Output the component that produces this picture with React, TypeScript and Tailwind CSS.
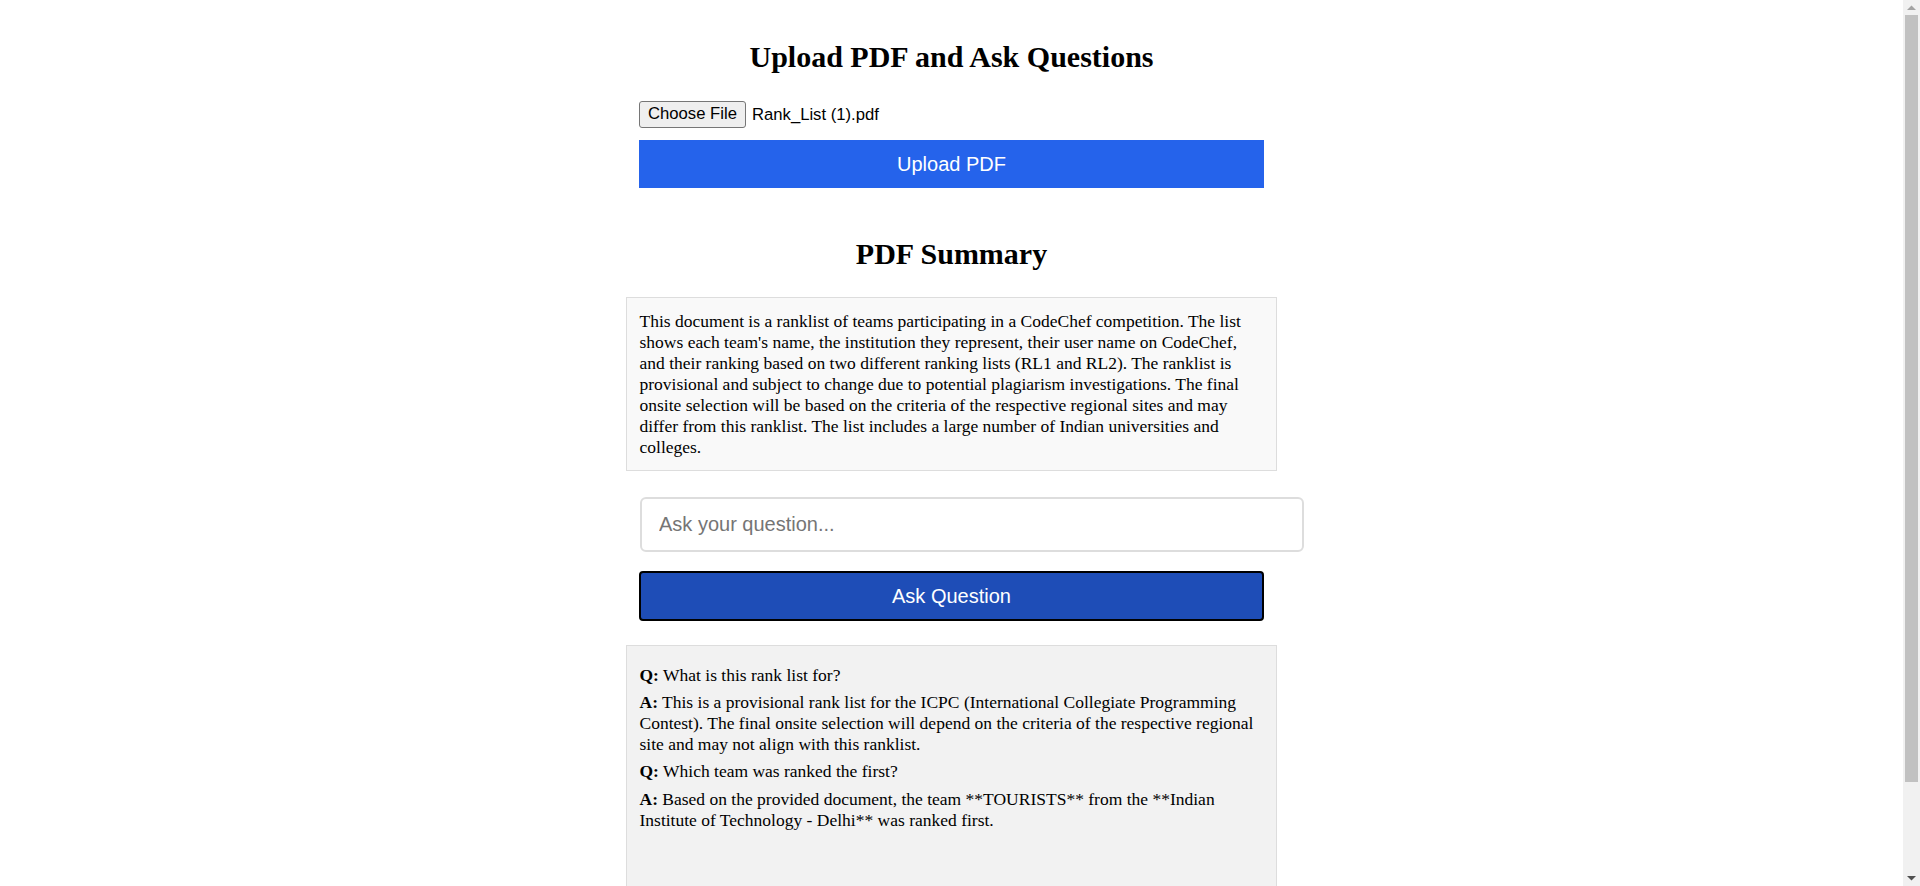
import React from 'react';

const qa = [
  {
    q: 'What is this rank list for?',
    a: 'This is a provisional rank list for the ICPC (International Collegiate Programming Contest). The final onsite selection will depend on the criteria of the respective regional site and may not align with this ranklist.',
  },
  {
    q: 'Which team was ranked the first?',
    a: 'Based on the provided document, the team **TOURISTS** from the **Indian Institute of Technology - Delhi** was ranked first.',
  },
];

function Scrollbar() {
  return (
    <div className="w-[17px] shrink-0 h-full bg-[#f1f1f1] flex flex-col items-center">
      <div className="h-[15px] flex items-center justify-center">
        <svg width="9" height="5" viewBox="0 0 9 5">
          <path d="M0 5 L4.5 0.5 L9 5 Z" fill="#a3a3a3" />
        </svg>
      </div>
      <div className="w-[13px] h-[767px] bg-[#c1c1c1]" />
      <div className="flex-1" />
      <div className="h-[15px] flex items-center justify-center">
        <svg width="9" height="5" viewBox="0 0 9 5">
          <path d="M0 0 L4.5 4.5 L9 0 Z" fill="#505050" />
        </svg>
      </div>
    </div>
  );
}

export default function App() {
  return (
    <div className="h-screen flex bg-white text-black font-['Liberation_Serif','Times_New_Roman',serif]">
      <div className="flex-1 overflow-hidden">
        <div className="flex flex-col items-center pt-[40px] pb-[42px]">
          <h1 className="text-[30px] font-bold leading-[34.5px]">Upload PDF and Ask Questions</h1>

          {/* Upload */}
          <div className="w-[625px] mt-[26.5px] font-['Liberation_Sans',Arial,sans-serif]">
            <div className="flex items-center h-[27px]">
              <button className="h-[27px] w-[107px] bg-[#efefef] border border-[#767676] rounded-[3px] text-[16.67px] text-black leading-none">
                Choose File
              </button>
              <span className="ml-[6px] text-[16.67px]">Rank_List (1).pdf</span>
            </div>
            <button className="mt-[12px] w-full h-[48px] bg-[#2563eb] text-white text-[20px]">Upload PDF</button>
          </div>

          <h2 className="mt-[49px] text-[30px] font-bold leading-[34.5px]">PDF Summary</h2>

          {/* Summary */}
          <div className="mt-[25.5px] w-[651px] border border-[#dddddd] bg-[#f9f9f9] px-[12.5px] py-[12.5px] text-[17.5px] leading-[21px]">
            This document is a ranklist of teams participating in a CodeChef competition. The list shows each team's
            name, the institution they represent, their user name on CodeChef, and their ranking based on two different
            ranking lists (RL1 and RL2). The ranklist is provisional and subject to change due to potential plagiarism
            investigations. The final onsite selection will be based on the criteria of the respective regional sites
            and may differ from this ranklist. The list includes a large number of Indian universities and colleges.
          </div>

          {/* Ask */}
          <div className="w-[625px] mt-[26px] font-['Liberation_Sans',Arial,sans-serif]">
            <input
              type="text"
              placeholder="Ask your question..."
              className="w-[664px] max-w-none h-[55px] ml-[1px] rounded-[6px] border-2 border-[#dddddd] bg-white px-[17px] text-[20px] placeholder:text-[#757575] outline-none"
            />
            <button className="mt-[19px] w-full h-[50px] bg-[#1e4db7] border-2 border-black rounded-[4px] text-white text-[20px]">
              Ask Question
            </button>
          </div>

          {/* Answers */}
          <div className="mt-[24px] w-[651px] min-h-[300px] border border-[#dddddd] bg-[#f2f2f2] px-[12.5px] py-[12.5px] text-[17.5px] leading-[21px]">
            {qa.map((item, i) => (
              <div key={i}>
                <p className="my-[6.25px]">
                  <strong>Q:</strong> {item.q}
                </p>
                <p className="my-[6.25px]">
                  <strong>A:</strong> {item.a}
                </p>
              </div>
            ))}
          </div>
        </div>
      </div>
      <Scrollbar />
    </div>
  );
}
